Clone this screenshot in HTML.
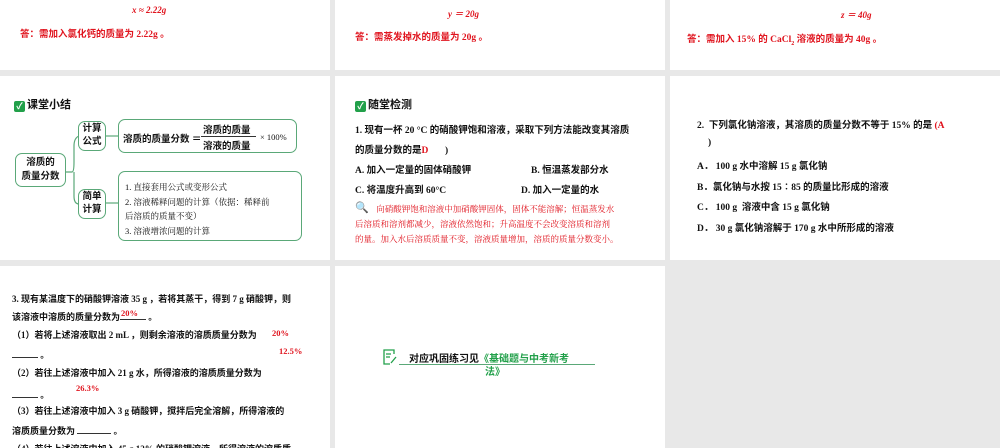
<!DOCTYPE html>
<html><head><meta charset="utf-8"><style>
*{margin:0;padding:0;box-sizing:border-box}
body{width:1000px;height:448px;background:#e8e8e8;position:relative;overflow:hidden;font-family:"Liberation Serif","Noto Sans CJK SC",serif;color:#111}
.p{position:absolute;background:#fff;overflow:hidden}
.a{position:absolute;white-space:nowrap}
.r{color:#e0141e;font-weight:bold}
.b{font-weight:bold;font-size:9.5px}
.s{font-family:"Liberation Serif","Noto Serif CJK SC",serif}
.box{position:absolute;border:1.3px solid #5aa878;border-radius:7px;background:#fff}
.hd{font-size:11px;font-weight:bold;font-family:"Liberation Sans","Noto Sans CJK SC",sans-serif}
.ck{display:inline-block;width:11px;height:11px;background:#22a04a;border-radius:2px;vertical-align:-1px;margin-right:2px;color:#fff;font-size:9px;line-height:11px;text-align:center}
</style></head><body>
<div class="p" style="left:0;top:0;width:330px;height:70px">
<div class="a r" style="left:132px;top:5px;font-size:9px;font-style:italic">x ≈ 2.22g</div>
<div class="a r" style="left:20px;top:26px;font-size:9.5px">答：需加入氯化钙的质量为 2.22g 。</div>
</div>
<div class="p" style="left:335px;top:0;width:330px;height:70px">
<div class="a r" style="left:113px;top:7px;font-size:9px;font-style:italic">y ＝ 20g</div>
<div class="a r" style="left:20px;top:29px;font-size:9.5px">答：需蒸发掉水的质量为 20g 。</div>
</div>
<div class="p" style="left:670px;top:0;width:330px;height:70px">
<div class="a r" style="left:171px;top:8px;font-size:9px;font-style:italic">z ＝ 40g</div>
<div class="a r" style="left:17px;top:31px;font-size:9.5px">答：需加入 15% 的 CaCl<sub style="font-size:6px">2</sub> 溶液的质量为 40g 。</div>
</div>

<div class="p" style="left:0;top:76px;width:330px;height:184px">
<div class="a hd" style="left:14px;top:20px"><span class="ck">✓</span>课堂小结</div>
<svg class="a" style="left:0;top:0" width="330" height="184"><g fill="none" stroke="#5aa878" stroke-width="1.2"><path d="M66 96 H72 Q74 96 74 86 V70 Q74 62 79 60"/><path d="M74 96 V120 Q74 128 79 128"/><path d="M106 60 H118"/><path d="M106 127 H118"/></g></svg>
<div class="box" style="left:15px;top:77px;width:51px;height:34px;font-size:9.5px;font-weight:bold;text-align:center;line-height:14px;padding-top:2px;font-family:'Liberation Sans','Noto Sans CJK SC'">溶质的<br>质量分数</div>
<div class="box" style="left:78px;top:45px;width:28px;height:30px;font-size:9.5px;font-weight:bold;text-align:center;line-height:13px;padding-top:1px">计算<br>公式</div>
<div class="box" style="left:78px;top:113px;width:28px;height:30px;font-size:9.5px;font-weight:bold;text-align:center;line-height:13px;padding-top:1px">简单<br>计算</div>
<div class="box" style="left:118px;top:43px;width:179px;height:34px"></div>
<div class="a b" style="left:123px;top:55px">溶质的质量分数 ＝</div>
<div class="a b" style="left:203px;top:46px">溶质的质量</div>
<div class="a" style="left:201px;top:60px;width:55px;border-top:1px solid #333"></div>
<div class="a b" style="left:203px;top:62px">溶液的质量</div>
<div class="a" style="left:260px;top:56px;font-size:8.5px">× 100%</div>
<div class="box" style="left:118px;top:95px;width:184px;height:70px"></div>
<div class="a s" style="left:125px;top:104px;font-size:8.5px;line-height:14.5px">1. 直接套用公式或变形公式<br>2. 溶液稀释问题的计算（依据：稀释前<br>后溶质的质量不变）<br>3. 溶液增浓问题的计算</div>
</div>

<div class="p" style="left:335px;top:76px;width:330px;height:184px">
<div class="a hd" style="left:20px;top:20px"><span class="ck">✓</span>随堂检测</div>
<div class="a b" style="left:20px;top:46px">1. 现有一杯 20 °C 的硝酸钾饱和溶液，采取下列方法能改变其溶质</div>
<div class="a b" style="left:20px;top:66px">的质量分数的是<span class="r">D</span>&nbsp;&nbsp;&nbsp;&nbsp;&nbsp;&nbsp;&nbsp;)</div>
<div class="a b" style="left:20px;top:86px">A. 加入一定量的固体硝酸钾</div>
<div class="a b" style="left:196px;top:86px">B. 恒温蒸发部分水</div>
<div class="a b" style="left:20px;top:106px">C. 将温度升高到 60°C</div>
<div class="a b" style="left:186px;top:106px">D. 加入一定量的水</div>
<div class="a" style="left:20px;top:125px;font-size:11px;color:#22a04a">🔍</div>
<div class="a s r" style="left:20px;top:126px;font-size:8.5px;line-height:15px;font-weight:normal">&nbsp;&nbsp;&nbsp;&nbsp;&nbsp;&nbsp;&nbsp;&nbsp;&nbsp;&nbsp;向硝酸钾饱和溶液中加硝酸钾固体，固体不能溶解；恒温蒸发水<br>后溶质和溶剂都减少，溶液依然饱和；升高温度不会改变溶质和溶剂<br>的量。加入水后溶质质量不变，溶液质量增加，溶质的质量分数变小。</div>
</div>

<div class="p" style="left:670px;top:76px;width:330px;height:184px">
<div class="a b" style="left:27px;top:41px">2.&nbsp; 下列氯化钠溶液，其溶质的质量分数不等于 15% 的是 <span class="r">(A</span></div>
<div class="a b" style="left:38px;top:62px">)</div>
<div class="a b" style="left:27px;top:82px">A．&nbsp;100 g 水中溶解 15 g 氯化钠</div>
<div class="a b" style="left:27px;top:103px">B．氯化钠与水按 15∶85 的质量比形成的溶液</div>
<div class="a b" style="left:27px;top:123px">C．&nbsp;100 g&nbsp; 溶液中含 15 g 氯化钠</div>
<div class="a b" style="left:27px;top:144px">D．&nbsp;30 g 氯化钠溶解于 170 g 水中所形成的溶液</div>
</div>

<div class="p" style="left:0;top:266px;width:330px;height:182px">
<div class="a b" style="left:12px;top:26px;font-size:9px">3. 现有某温度下的硝酸钾溶液 35 g ，若将其蒸干，得到 7 g 硝酸钾，则</div>
<div class="a b" style="left:12px;top:44px;font-size:9px">该溶液中溶质的质量分数为<span style="display:inline-block;width:26px;border-bottom:1px solid #333"></span> 。</div>
<div class="a r" style="left:121px;top:42px;font-size:8.5px">20%</div>
<div class="a b" style="left:12px;top:62px;font-size:9px">（1）若将上述溶液取出 2 mL ，则剩余溶液的溶质质量分数为</div>
<div class="a r" style="left:272px;top:62px;font-size:8.5px">20%</div>
<div class="a b" style="left:12px;top:82px;font-size:9px"><span style="display:inline-block;width:26px;border-bottom:1px solid #333"></span> 。</div>
<div class="a r" style="left:279px;top:80px;font-size:8.5px">12.5%</div>
<div class="a b" style="left:12px;top:100px;font-size:9px">（2）若往上述溶液中加入 21 g 水，所得溶液的溶质质量分数为</div>
<div class="a b" style="left:12px;top:122px;font-size:9px"><span style="display:inline-block;width:26px;border-bottom:1px solid #333"></span> 。</div>
<div class="a r" style="left:76px;top:117px;font-size:8.5px">26.3%</div>
<div class="a b" style="left:12px;top:138px;font-size:9px">（3）若往上述溶液中加入 3 g 硝酸钾，搅拌后完全溶解，所得溶液的</div>
<div class="a b" style="left:12px;top:158px;font-size:9px">溶质质量分数为 <span style="display:inline-block;width:34px;border-bottom:1px solid #333"></span> 。</div>
<div class="a b" style="left:12px;top:176px;font-size:9px">（4）若往上述溶液中加入 45 g 12% 的硝酸钾溶液，所得溶液的溶质质</div>
</div>

<div class="p" style="left:335px;top:266px;width:330px;height:182px">
<svg class="a" style="left:47px;top:82px" width="16" height="18"><g fill="none" stroke="#22a04a" stroke-width="1.3"><path d="M12 6V2H2V16H8"/><path d="M4 6H9M4 9H8"/><path d="M9 15L14 9"/></g></svg>
<div class="a" style="left:64px;top:98px;width:196px;border-top:1.2px solid #5aa878"></div>
<div class="a" style="left:74px;top:84px;font-size:10px;font-weight:bold;font-family:'Liberation Sans','Noto Sans CJK SC',sans-serif">对应巩固练习见<span style="color:#22a04a">《基础题与中考新考</span></div>
<div class="a" style="left:150px;top:97px;font-size:10px;font-weight:bold;color:#22a04a;font-family:'Liberation Sans','Noto Sans CJK SC',sans-serif">法》</div>
</div>
</body></html>
